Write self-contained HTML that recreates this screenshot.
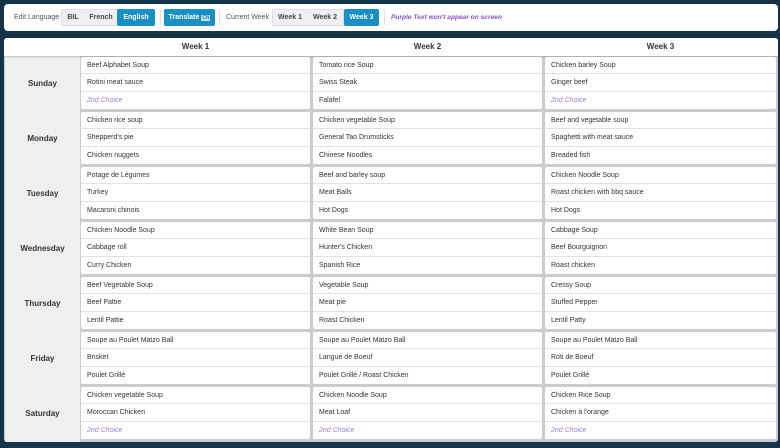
<!DOCTYPE html>
<html><head><meta charset="utf-8"><style>
*{box-sizing:border-box;margin:0;padding:0}
body{width:780px;height:448px;background:#153448;font-family:"Liberation Sans","DejaVu Sans",sans-serif;position:relative;overflow:hidden;color:#333}
.tb{position:absolute;left:4px;top:4px;width:774px;height:27px;background:#fff;border-radius:4px}
.tb span{position:absolute;font-size:7px;top:0;line-height:27px}
.grp{position:absolute;top:5px;height:17px;background:#eef0f1;border:1px solid #dde;border-radius:2px}
.btn{position:absolute;top:5px;height:17px;line-height:17px;font-size:7px;font-weight:bold;text-align:center;color:#fff;background:#1a8fc4;border-radius:2px}
.g{position:absolute;top:5px;height:17px;line-height:17px;font-size:7px;font-weight:bold;color:#444;text-align:center}
.sep{position:absolute;top:6px;width:1px;height:15px;background:#dde}
.panel{position:absolute;left:4px;top:38px;width:774px;height:404px;background:#c9cdd0;border-radius:3px;overflow:hidden}
.hdr{position:absolute;left:0;top:0;width:774px;height:18px;background:#fff;box-shadow:0 1px 2px rgba(0,0,0,.2)}
.hdr div{position:absolute;top:0;line-height:18px;font-size:8px;font-weight:bold;text-align:center}
.days{position:absolute;left:1px;top:18px;width:75px;height:386px;background:#eeeff0}
.day{position:absolute;left:0;width:75px;text-align:center;font-size:8px;font-weight:bold}
.cell{position:absolute;background:#fff;border-radius:2px;height:52px}
.cell div{height:17.33px;line-height:17px;font-size:7px;padding-left:6px;border-bottom:1px solid #dfe2e4;color:#333}
.cell div:last-child{border-bottom:none}
.cell .p{color:#9b7ee0;font-style:italic}
</style></head><body>
<div class="tb">
<span style="left:10px;color:#555">Edit Language</span>
<div class="grp" style="left:57px;width:94px"></div>
<div class="g" style="left:60px;width:18px">BIL</div>
<div class="g" style="left:83px;width:28px">French</div>
<div class="btn" style="left:113px;width:38px">English</div>
<div class="sep" style="left:156px"></div>
<div class="btn" style="left:160px;width:51px">Translate <span style="position:static;background:#cde;color:#1a8fc4;padding:0 1px;font-size:5px;line-height:7px">CN</span></div>
<div class="sep" style="left:215px"></div>
<span style="left:222px;color:#555">Current Week</span>
<div class="grp" style="left:268px;width:72px"></div>
<div class="g" style="left:270px;width:32px">Week 1</div>
<div class="g" style="left:304px;width:34px">Week 2</div>
<div class="btn" style="left:340px;width:35px">Week 3</div>
<div class="sep" style="left:380px"></div>
<span style="left:387px;color:#8a4fd6;font-style:italic;font-weight:bold;font-size:6.6px">Purple Text won't appear on screen</span>
</div>
<div class="panel">
<div class="days">
<div class="day" style="top:23px">Sunday</div>
<div class="day" style="top:78px">Monday</div>
<div class="day" style="top:133px">Tuesday</div>
<div class="day" style="top:188px">Wednesday</div>
<div class="day" style="top:243px">Thursday</div>
<div class="day" style="top:298px">Friday</div>
<div class="day" style="top:353px">Saturday</div>
</div>
<div class="hdr"><div style="left:77px;width:229px">Week 1</div><div style="left:309px;width:229px">Week 2</div><div style="left:541px;width:231px">Week 3</div></div>
<div class="cell" style="left:77px;top:19px;width:229px"><div>Beef Alphabet Soup</div><div>Rotini meat sauce</div><div class="p">2nd Choice</div></div>
<div class="cell" style="left:309px;top:19px;width:229px"><div>Tomato rice Soup</div><div>Swiss Steak</div><div>Falafel</div></div>
<div class="cell" style="left:541px;top:19px;width:231px"><div>Chicken barley Soup</div><div>Ginger beef</div><div class="p">2nd Choice</div></div>

<div class="cell" style="left:77px;top:74px;width:229px"><div>Chicken rice soup</div><div>Shepperd's pie</div><div>Chicken nuggets</div></div>
<div class="cell" style="left:309px;top:74px;width:229px"><div>Chicken vegetable Soup</div><div>General Tao Drumsticks</div><div>Chinese Noodles</div></div>
<div class="cell" style="left:541px;top:74px;width:231px"><div>Beef and vegetable soup</div><div>Spaghetti with meat sauce</div><div>Breaded fish</div></div>

<div class="cell" style="left:77px;top:129px;width:229px"><div>Potage de Légumes</div><div>Turkey</div><div>Macaroni chinois</div></div>
<div class="cell" style="left:309px;top:129px;width:229px"><div>Beef and barley soup</div><div>Meat Balls</div><div>Hot Dogs</div></div>
<div class="cell" style="left:541px;top:129px;width:231px"><div>Chicken Noodle Soup</div><div>Roast chicken with bbq sauce</div><div>Hot Dogs</div></div>

<div class="cell" style="left:77px;top:184px;width:229px"><div>Chicken Noodle Soup</div><div>Cabbage roll</div><div>Curry Chicken</div></div>
<div class="cell" style="left:309px;top:184px;width:229px"><div>White Bean Soup</div><div>Hunter's Chicken</div><div>Spanish Rice</div></div>
<div class="cell" style="left:541px;top:184px;width:231px"><div>Cabbage Soup</div><div>Beef Bourguignon</div><div>Roast chicken</div></div>

<div class="cell" style="left:77px;top:239px;width:229px"><div>Beef Vegetable Soup</div><div>Beef Pattie</div><div>Lentil Pattie</div></div>
<div class="cell" style="left:309px;top:239px;width:229px"><div>Vegetable Soup</div><div>Meat pie</div><div>Roast Chicken</div></div>
<div class="cell" style="left:541px;top:239px;width:231px"><div>Cressy Soup</div><div>Stuffed Pepper</div><div>Lentil Patty</div></div>

<div class="cell" style="left:77px;top:294px;width:229px"><div>Soupe au Poulet Matzo Ball</div><div>Brisket</div><div>Poulet Grillé</div></div>
<div class="cell" style="left:309px;top:294px;width:229px"><div>Soupe au Poulet Matzo Ball</div><div>Langue de Boeuf</div><div>Poulet Grillé / Roast Chicken</div></div>
<div class="cell" style="left:541px;top:294px;width:231px"><div>Soupe au Poulet Matzo Ball</div><div>Roti de Boeuf</div><div>Poulet Grillé</div></div>

<div class="cell" style="left:77px;top:349px;width:229px"><div>Chicken vegetable Soup</div><div>Moroccan Chicken</div><div class="p">2nd Choice</div></div>
<div class="cell" style="left:309px;top:349px;width:229px"><div>Chicken Noodle Soup</div><div>Meat Loaf</div><div class="p">2nd Choice</div></div>
<div class="cell" style="left:541px;top:349px;width:231px"><div>Chicken Rice Soup</div><div>Chicken à l'orange</div><div class="p">2nd Choice</div></div>
</div>
</body></html>
